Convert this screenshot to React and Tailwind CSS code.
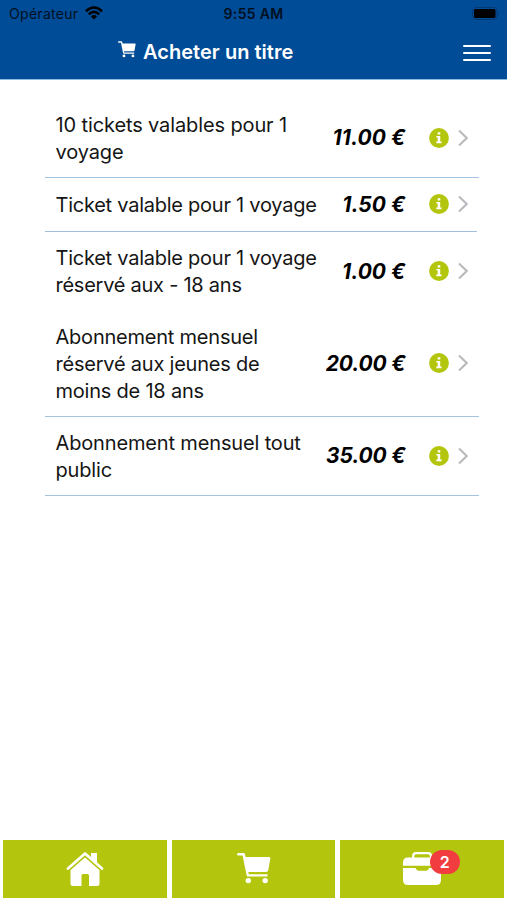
const rows = [
  { lines: ['10 tickets valables pour 1', 'voyage'], price: '11.00 €', box: 'h-[79px]', rule: 'w-[434px] border-b border-[#a3c3e0]', track: 'tracking-[-0.12px]', priceTrack: 'tracking-[0.1px]' },
  { lines: ['Ticket valable pour 1 voyage'], price: '1.50 €', box: 'h-[54px]', rule: 'w-[432px] border-b border-[#a3bfdf]', track: 'tracking-[-0.25px]', priceTrack: 'tracking-[0.05px]' },
  { lines: ['Ticket valable pour 1 voyage', 'réservé aux - 18 ans'], price: '1.00 €', box: 'h-[79px]', rule: 'w-[434px]', track: 'tracking-[-0.25px]', priceTrack: 'tracking-[0.05px]' },
  { lines: ['Abonnement mensuel', 'réservé aux jeunes de', 'moins de 18 ans'], price: '20.00 €', box: 'h-[106px]', rule: 'w-[434px] border-b border-[#a3c3e0]', track: 'tracking-[-0.22px]', priceTrack: 'tracking-[-0.15px]' },
  { lines: ['Abonnement mensuel tout', 'public'], price: '35.00 €', box: 'h-[79px]', rule: 'w-[434px] border-b border-[#a3c3e0]', track: 'tracking-[-0.15px]', priceTrack: 'tracking-[-0.15px]' },
];

function Cart({ className }) {
  return (
    <svg viewBox="0 0 34 31" className={className} fill="currentColor">
      <path d="M1.3 0H6.5Q7.7 0 8 1.200L8.600 4H32Q33.600 4 33.300 5.600L31.300 17Q31 18.600 29.400 18.900H11.300L11.800 21.300H30.500V23.400H11Q9.900 23.400 9.600 22.200L5.600 2.600H1.300Q0 2.600 0 1.300T1.300 0Z" />
      <circle cx="11.3" cy="27.6" r="2.7" />
      <circle cx="28.2" cy="27.6" r="2.7" />
    </svg>
  );
}

function Info() {
  return (
    <svg viewBox="0 0 20 20" className="h-5 w-5 shrink-0">
      <circle cx="10" cy="10" r="9.9" fill="#b3c60d" />
      <path d="M8.7 4.2h2.6v2.3H8.7zM7.4 8h3.8v5.6h1.4v1.7H7.3v-1.7h1.4V9.6H7.4z" fill="#fff" />
    </svg>
  );
}

function StatusBar() {
  return (
    <div className="grid h-7 grid-cols-3 items-center text-[#00101f]">
      <div className="flex items-center pl-[9px]">
        <span className="-mt-[2px] w-[76px] text-[14px] tracking-[0.3px]">Opérateur</span>
        <svg viewBox="0 0 18 14" className="-mt-[2px] h-[14px] w-[18px] shrink-0" fill="none" stroke="#000" strokeWidth="2.6">
          <path d="M.9 5.2Q9-2.2 17.1 5.2M3.8 8.2Q9 3.7 14.2 8.2" />
          <path d="M5.9 10.4Q9 7.8 12.1 10.4L9 13.6Z" fill="#000" stroke="none" />
        </svg>
      </div>
      <span className="-mt-px text-center text-[14px] font-semibold tracking-[0.3px]">9:55 AM</span>
      <div className="flex justify-end pr-[7px]">
        <svg viewBox="0 0 28 13" className="-mt-px h-[13px] w-7">
          <rect x=".5" y=".5" width="24.5" height="12" rx="3.5" fill="none" stroke="#003a75" />
          <rect x="2" y="2" width="21.5" height="9" rx="1.5" fill="#000" />
          <path d="M26 4.5Q28 6.5 26 8.5Z" fill="#003a75" />
        </svg>
      </div>
    </div>
  );
}

export default function App() {
  return (
    <div className="flex h-[900px] w-[507px] flex-col overflow-hidden bg-white font-['Inter','Liberation_Sans',sans-serif]">
      <header className="h-[80px] border-b border-[#8fb9de] bg-[#004c97]">
        <StatusBar />
        <div className="flex h-12 items-center pl-[118px] pr-4 text-white">
          <Cart className="-mt-[6px] mr-[7px] h-[17px] w-[18px]" />
          <h1 className="grow whitespace-nowrap text-[20px] font-semibold tracking-[0.03px]">Acheter un titre</h1>
          <div className="mt-[2px] flex w-[28px] flex-col gap-[4.5px]">
            <i className="h-[2.5px] rounded-full bg-white" />
            <i className="h-[2.5px] rounded-full bg-white" />
            <i className="h-[2.5px] rounded-full bg-white" />
          </div>
        </div>
      </header>

      <main className="grow pl-[45px] pt-[19px]">
        {rows.map((r, i) => (
          <div key={i} className={`flex items-center pl-[10.5px] ${r.box} ${r.rule}`}>
            <div className={`w-[262px] shrink-0 whitespace-nowrap pt-px text-[20px] leading-[27px] text-[#151515] ${r.track}`}>
              {r.lines.map((l) => <p key={l}>{l}</p>)}
            </div>
            <span className={`-mt-px w-[88px] shrink-0 whitespace-nowrap text-right text-[21px] font-bold italic leading-[27px] text-black ${r.priceTrack}`}>{r.price}</span>
            <div className="-mt-px ml-[23.5px] flex items-center gap-[9px]">
              <Info />
              <svg viewBox="0 0 10 18" className="h-[18px] w-[10px]" fill="none" stroke="#b9b9bd" strokeWidth="2">
                <path d="M1 1.5L8.7 9L1 16.5" />
              </svg>
            </div>
          </div>
        ))}
      </main>

      <nav className="flex h-[60.5px] gap-[5px] px-[3px] pb-[2.5px] text-white">
        <div className="flex flex-1 items-center justify-center bg-[#b3c60d]">
          <svg viewBox="0 0 38 36" className="h-9 w-[38px]" fill="currentColor">
            <path d="M19 6.2L33.5 19V32.5Q33.5 35 31 35H23V24.5Q23 23 21.5 23H17Q15.500 23 15.500 24.500V35H7Q4.500 35 4.500 32.500V19Z" />
            <path d="M2 17.500L19 2.500L36 17.500" fill="none" stroke="#b3c60d" strokeWidth="5.500" />
            <path d="M25 2H31V12L25 7Z" />
            <path d="M2 17.500L19 2.500L36 17.500" fill="none" stroke="currentColor" strokeWidth="2.700" strokeLinecap="round" strokeLinejoin="round" />
          </svg>
        </div>
        <div className="flex flex-1 items-center justify-center bg-[#b3c60d]">
          <Cart className="h-[31px] w-[34px]" />
        </div>
        <div className="flex flex-1 items-center justify-center bg-[#b3c60d]">
          <div className="relative h-[33px] w-[38px]">
            <svg viewBox="0 0 38 33" className="h-full w-full">
              <path d="M10.200 7V4Q10.200 1.200 13 1.200H25Q28 1.200 28 4V7" fill="none" stroke="#fff" strokeWidth="2.200" />
              <path d="M5 5.500H33Q38 5.500 38 10.500V13.700H0V10.500Q0 5.500 5 5.500ZM0 16H12.500Q13.500 18.700 15.500 18.700H23Q25.500 18.700 26 16H38V28Q38 33 33 33H5Q0 33 0 28Z" fill="#fff" />
            </svg>
            <span className="absolute -top-[2.5px] left-[26.5px] flex h-6 w-[30px] items-center justify-center rounded-full bg-[#f23d40] text-[16px] font-semibold">2</span>
          </div>
        </div>
      </nav>
    </div>
  );
}
